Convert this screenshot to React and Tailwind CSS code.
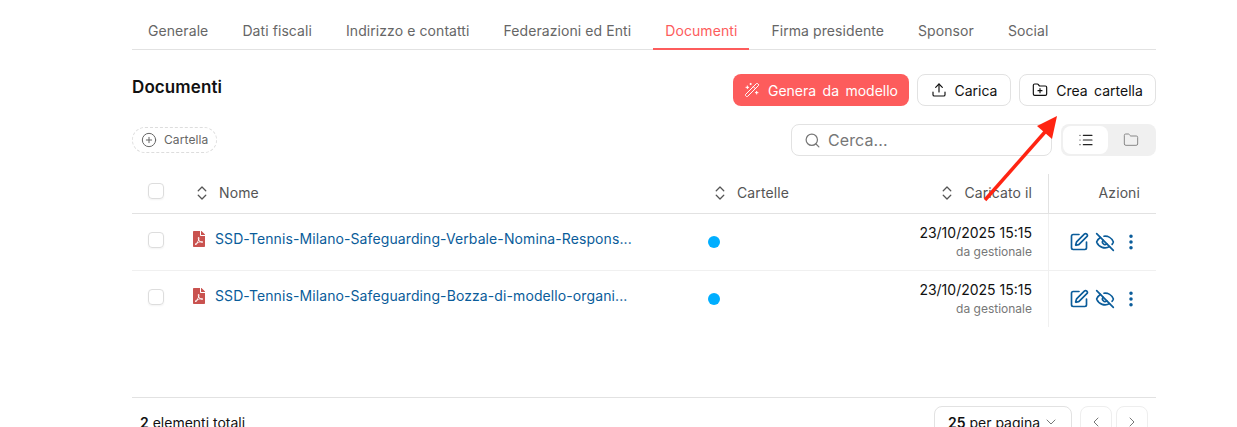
import {
  WandSparkles,
  Upload,
  FolderPlus,
  Search,
  List,
  Folder,
  CirclePlus,
  ChevronsUpDown,
  SquarePen,
  EyeOff,
  EllipsisVertical,
  ChevronDown,
  ChevronLeft,
  ChevronRight,
} from 'lucide-react';
import { FaFilePdf } from 'react-icons/fa';

const tabs = ['Generale', 'Dati fiscali', 'Indirizzo e contatti', 'Federazioni ed Enti', 'Documenti', 'Firma presidente', 'Sponsor', 'Social'];

const rows = [
  'SSD-Tennis-Milano-Safeguarding-Verbale-Nomina-Respons...',
  'SSD-Tennis-Milano-Safeguarding-Bozza-di-modello-organi...',
];

const gridCols = 'grid grid-cols-[58px_512px_1fr_108px]';

function SortHeader({ children }) {
  return (
    <span className="flex items-center gap-2">
      <ChevronsUpDown className="w-[18px] h-[18px] text-[#555]" strokeWidth={1.75} />
      {children}
    </span>
  );
}

export default function App() {
  return (
    <div className="relative h-[427px] w-[1237px] overflow-hidden bg-white pl-[132px] pr-[81px] text-[14px] tracking-[0.1px] font-['Inter',sans-serif] text-[#111]">
      {/* Tabs */}
      <div className="flex h-[50px] items-end gap-[10px] border-b border-[#e2e2e2] pl-1 tracking-[0.08px]">
        {tabs.map((tab) => (
          <div
            key={tab}
            className={`flex h-[48px] items-center px-3 pt-[10px] border-b-2 -mb-px ${tab === 'Documenti' ? 'border-[#fd5c5c] text-[#fd5c5c]' : 'border-transparent text-[#666]'}`}
          >
            {tab}
          </div>
        ))}
      </div>

      {/* Title and actions */}
      <div className="mt-6 flex h-8 items-center justify-between">
        <h2 className="-mt-[4px] text-[17px] font-semibold">Documenti</h2>
        <div className="flex gap-2 tracking-normal">
          <button className="flex h-8 w-[176px] items-center justify-center gap-2 rounded-lg bg-[#fd5c5c] text-white [word-spacing:2.5px]">
            <WandSparkles className="w-4 h-4" strokeWidth={1.5} />
            Genera da modello
          </button>
          <button className="flex h-8 w-[94px] items-center justify-center gap-2 rounded-lg border border-[#e2e2e2]">
            <Upload className="w-4 h-4" strokeWidth={1.75} />
            Carica
          </button>
          <button className="flex h-8 w-[137px] items-center justify-center gap-2 rounded-lg border border-[#e2e2e2] [word-spacing:2.5px]">
            <FolderPlus className="w-4 h-4" strokeWidth={1.75} />
            Crea cartella
          </button>
        </div>
      </div>

      {/* Filters */}
      <div className="mt-[18px] flex h-8 items-center">
        <button className="flex h-[26px] w-[85px] items-center gap-[7px] rounded-full border border-dashed border-[#ddd] pl-2 text-[12px] text-[#666]">
          <CirclePlus className="w-4 h-4" strokeWidth={1.5} />
          Cartella
        </button>
        <div className="ml-auto flex h-8 w-[261px] items-center gap-[7px] rounded-lg border border-[#e2e2e2] pl-3 text-[16px] text-[#777]">
          <Search className="w-[17px] h-[17px]" strokeWidth={1.75} />
          Cerca...
        </div>
        <div className="ml-[9px] flex h-8 w-[95px] items-center rounded-lg bg-[#f0f0f0] p-0.5">
          <div className="flex h-7 w-[45px] items-center justify-center rounded-lg bg-white">
            <List className="w-4 h-4 text-[#222]" strokeWidth={1.75} />
          </div>
          <div className="flex h-7 flex-1 items-center justify-center">
            <Folder className="w-4 h-4 text-[#888]" strokeWidth={1.5} />
          </div>
        </div>
      </div>

      {/* Table */}
      <div className={`${gridCols} mt-[18px] h-[40px] border-b border-[#e2e2e2] text-[#555]`}>
        <div className="flex items-center pl-4 pb-[5px]">
          <span className="h-4 w-4 rounded border border-[#ddd] shadow-xs" />
        </div>
        <div className="flex items-center pl-[3px] pb-[2px]"><SortHeader>Nome</SortHeader></div>
        <div className="flex items-center justify-between pl-[9px] pr-4 pb-[2px]">
          <SortHeader>Cartelle</SortHeader>
          <SortHeader>Caricato il</SortHeader>
        </div>
        <div className="flex items-center justify-end border-l border-[#e2e2e2] pr-4 pb-[2px]">Azioni</div>
      </div>

      {rows.map((name, index) => (
        <div key={name} className={`${gridCols} h-[57px] border-b ${index === 0 ? 'border-[#f0f0f0]' : 'border-transparent'}`}>
          <div className="flex items-center pl-4 pb-[4px]">
            <span className="h-4 w-4 rounded border border-[#ddd] shadow-xs" />
          </div>
          <div className="flex items-center gap-[10px] pl-[3px] pb-[7px]">
            <FaFilePdf className="w-3 h-4 text-[#c9524f]" />
            <a className="text-[#0a5c9a]">{name}</a>
          </div>
          <div className="flex items-center justify-between pl-[6px] pr-4">
            <span className="h-3 w-3 rounded-full bg-[#00aeff]" />
            <div className="text-right leading-[19px] tracking-normal">
              <div>23/10/2025 15:15</div>
              <div className="text-[12px] text-[#777]">da gestionale</div>
            </div>
          </div>
          <div className="flex items-center gap-[6px] border-l border-[#f0f0f0] pl-[20px] text-[#0a5c9a]">
            <SquarePen className="w-5 h-5" strokeWidth={2} />
            <EyeOff className="w-5 h-5" strokeWidth={2} />
            <EllipsisVertical className="w-5 h-5" strokeWidth={2.25} />
          </div>
        </div>
      ))}

      {/* Footer */}
      <div className="mt-[69px] flex border-t border-[#e2e2e2] pt-2 pl-2">
        <div className="pt-[6px] tracking-normal">
          <b className="font-semibold">2</b> elementi totali
        </div>
        <div className="ml-auto flex gap-1 pr-2">
          <div className="flex h-8 w-[138px] items-center justify-between rounded-lg border border-[#e2e2e2] pl-[13px] pr-3 tracking-normal">
            <span><b className="font-semibold">25</b> per pagina</span>
            <ChevronDown className="w-4 h-4 text-[#777]" strokeWidth={1.5} />
          </div>
          <div className="ml-[4px] flex h-8 w-8 items-center justify-center rounded-lg border border-[#eee]">
            <ChevronLeft className="w-4 h-4 text-[#777]" strokeWidth={1.5} />
          </div>
          <div className="flex h-8 w-8 items-center justify-center rounded-lg border border-[#eee]">
            <ChevronRight className="w-4 h-4 text-[#777]" strokeWidth={1.5} />
          </div>
        </div>
      </div>

      {/* Red annotation arrow */}
      <svg className="absolute left-[975px] top-[110px]" width="90" height="95" viewBox="0 0 90 95">
        <line x1="10" y1="90" x2="70" y2="22" stroke="#ff2412" strokeWidth="3.5" />
        <polygon points="82,6 62,16 77,29" fill="#ff2412" />
      </svg>
    </div>
  );
}
